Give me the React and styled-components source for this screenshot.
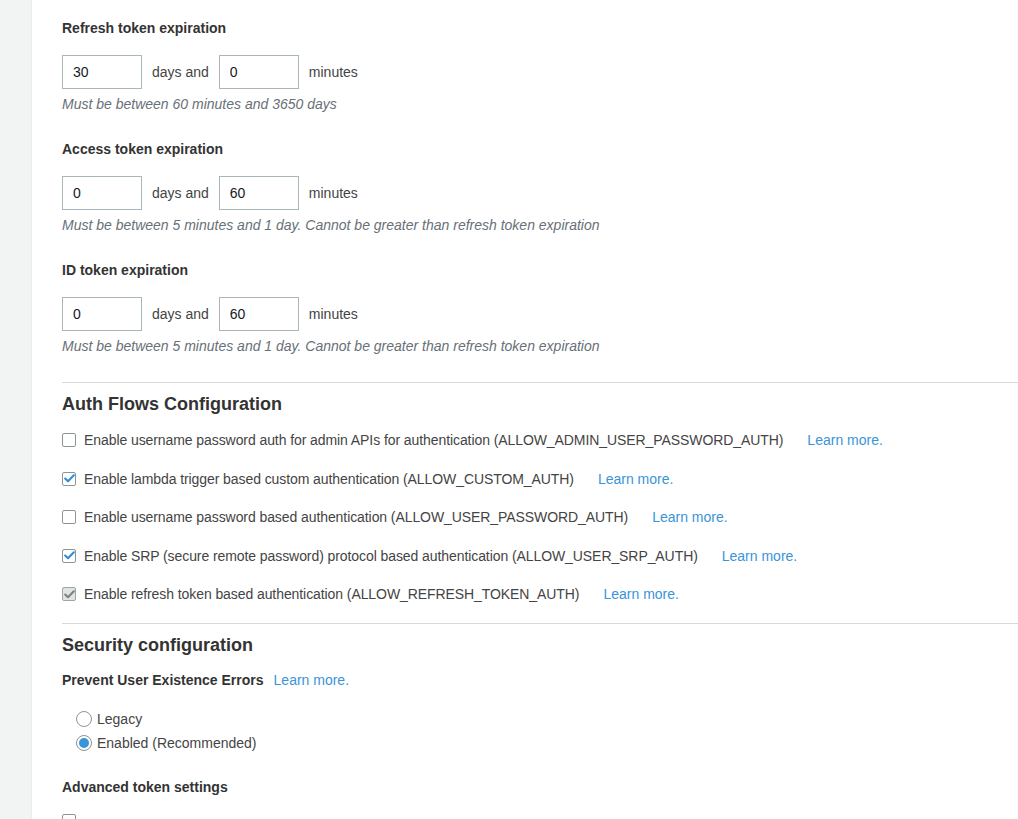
import React from "react";
import styled, { createGlobalStyle } from "styled-components";

const Global = createGlobalStyle`
  html, body { margin: 0; padding: 0; background: #fff; }
  body { font-family: "Liberation Sans", Arial, Helvetica, sans-serif; color: #333; }
  * { box-sizing: border-box; }
`;

const Page = styled.div`
  display: flex;
  min-height: 819px;
  height: 819px;
  overflow: hidden;
`;

const Sidebar = styled.aside`
  width: 32px;
  flex: none;
  background: #f2f3f3;
  border-right: 1px solid #eaeded;
`;

const Main = styled.main`
  flex: 1;
  padding: 18px 0 0 30px;
`;

const FieldLabel = styled.div`
  font-size: 14px;
  line-height: 20px;
  font-weight: bold;
  color: #333;
  margin-top: ${(p) => p.$top || 0}px;
`;

const InputRow = styled.div`
  display: flex;
  align-items: center;
  gap: 10px;
  margin-top: 17px;
  height: 34px;
`;

const NumberBox = styled.input`
  width: 80px;
  height: 34px;
  border: 1px solid #aab7b8;
  border-radius: 0;
  padding: 0 10px;
  font-family: inherit;
  font-size: 14px;
  color: #16191f;
  background: #fff;
  outline: none;
`;

const Unit = styled.span`
  font-size: 14px;
  color: #444;
`;

const Hint = styled.div`
  font-size: 14px;
  line-height: 20px;
  font-style: italic;
  color: #687078;
  margin-top: 5px;
`;

const Divider = styled.hr`
  border: none;
  border-top: 1px solid #d5dbdb;
  margin: ${(p) => p.$top}px 0 0 0;
  height: 0;
`;

const SectionTitle = styled.h2`
  font-size: 18px;
  line-height: 24px;
  font-weight: bold;
  color: #333;
  margin: 9px 0 0 0;
`;

const FlowList = styled.div`
  display: flex;
  flex-direction: column;
  gap: 18.5px;
  margin-top: 14px;
`;

const FlowRow = styled.label`
  display: flex;
  align-items: center;
  height: 20px;
  font-size: 14px;
  color: #444;
`;

const FlowText = styled.span`
  letter-spacing: -0.08px;
`;

const Box = styled.span`
  width: 14px;
  height: 14px;
  flex: none;
  border: 1px solid ${(p) => (p.$disabled ? "#a0a6a6" : "#8d9696")};
  border-radius: 2px;
  background: ${(p) => (p.$disabled ? "#e1e4e4" : "#fff")};
  display: flex;
  align-items: center;
  justify-content: center;
  margin-right: 8px;
`;

const Link = styled.a`
  color: #3a94d8;
  text-decoration: none;
  font-size: 14px;
  margin-left: ${(p) => p.$gap ?? 24}px;
  cursor: pointer;
`;

const SubRow = styled.div`
  display: flex;
  align-items: center;
  margin-top: 13px;
  line-height: 20px;
`;

const RadioGroup = styled.div`
  display: flex;
  flex-direction: column;
  gap: 4px;
  margin-top: 19px;
  padding-left: 14px;
`;

const RadioRow = styled.label`
  display: flex;
  align-items: center;
  height: 20px;
  font-size: 14px;
  color: #444;
`;

const RadioDot = styled.span`
  width: 16px;
  height: 16px;
  flex: none;
  border-radius: 50%;
  border: 1px solid #8d9696;
  background: #fff;
  margin-right: 5px;
  display: flex;
  align-items: center;
  justify-content: center;
  &::after {
    content: "";
    width: 10px;
    height: 10px;
    border-radius: 50%;
    background: ${(p) => (p.$on ? "#3a94d8" : "transparent")};
  }
`;

const Check = ({ on, disabled }) => (
  <Box $disabled={disabled}>
    {on && (
      <svg width="11" height="9" viewBox="0 0 11 9">
        <path
          d="M1.2 4.6 L4 7.3 L9.8 1.3"
          fill="none"
          stroke={disabled ? "#7d8383" : "#2f8dd9"}
          strokeWidth="2.1"
          strokeLinecap="round"
          strokeLinejoin="round"
        />
      </svg>
    )}
  </Box>
);

const tokens = [
  { label: "Refresh token expiration", days: "30", mins: "0", hint: "Must be between 60 minutes and 3650 days" },
  { label: "Access token expiration", days: "0", mins: "60", hint: "Must be between 5 minutes and 1 day. Cannot be greater than refresh token expiration" },
  { label: "ID token expiration", days: "0", mins: "60", hint: "Must be between 5 minutes and 1 day. Cannot be greater than refresh token expiration" },
];

const flows = [
  { text: "Enable username password auth for admin APIs for authentication (ALLOW_ADMIN_USER_PASSWORD_AUTH)", on: false },
  { text: "Enable lambda trigger based custom authentication (ALLOW_CUSTOM_AUTH)", on: true },
  { text: "Enable username password based authentication (ALLOW_USER_PASSWORD_AUTH)", on: false },
  { text: "Enable SRP (secure remote password) protocol based authentication (ALLOW_USER_SRP_AUTH)", on: true },
  { text: "Enable refresh token based authentication (ALLOW_REFRESH_TOKEN_AUTH)", on: true, disabled: true },
];

export default function App() {
  return (
    <>
      <Global />
      <Page>
        <Sidebar />
        <Main>
          {tokens.map((t, i) => (
            <React.Fragment key={t.label}>
              <FieldLabel $top={i === 0 ? 0 : 25}>{t.label}</FieldLabel>
              <InputRow>
                <NumberBox defaultValue={t.days} />
                <Unit>days and</Unit>
                <NumberBox defaultValue={t.mins} />
                <Unit>minutes</Unit>
              </InputRow>
              <Hint>{t.hint}</Hint>
            </React.Fragment>
          ))}

          <Divider $top={26} />
          <SectionTitle>Auth Flows Configuration</SectionTitle>
          <FlowList>
            {flows.map((f) => (
              <FlowRow key={f.text}>
                <Check on={f.on} disabled={f.disabled} />
                <FlowText>{f.text}</FlowText>
                <Link>Learn more.</Link>
              </FlowRow>
            ))}
          </FlowList>

          <Divider $top={19} />
          <SectionTitle>Security configuration</SectionTitle>
          <SubRow>
            <FieldLabel>Prevent User Existence Errors</FieldLabel>
            <Link $gap={10}>Learn more.</Link>
          </SubRow>
          <RadioGroup>
            <RadioRow>
              <RadioDot />
              Legacy
            </RadioRow>
            <RadioRow>
              <RadioDot $on />
              Enabled (Recommended)
            </RadioRow>
          </RadioGroup>
          <FieldLabel $top={24}>Advanced token settings</FieldLabel>
          <FlowList>
            <FlowRow>
              <Check on={false} />
            </FlowRow>
          </FlowList>
        </Main>
      </Page>
    </>
  );
}
